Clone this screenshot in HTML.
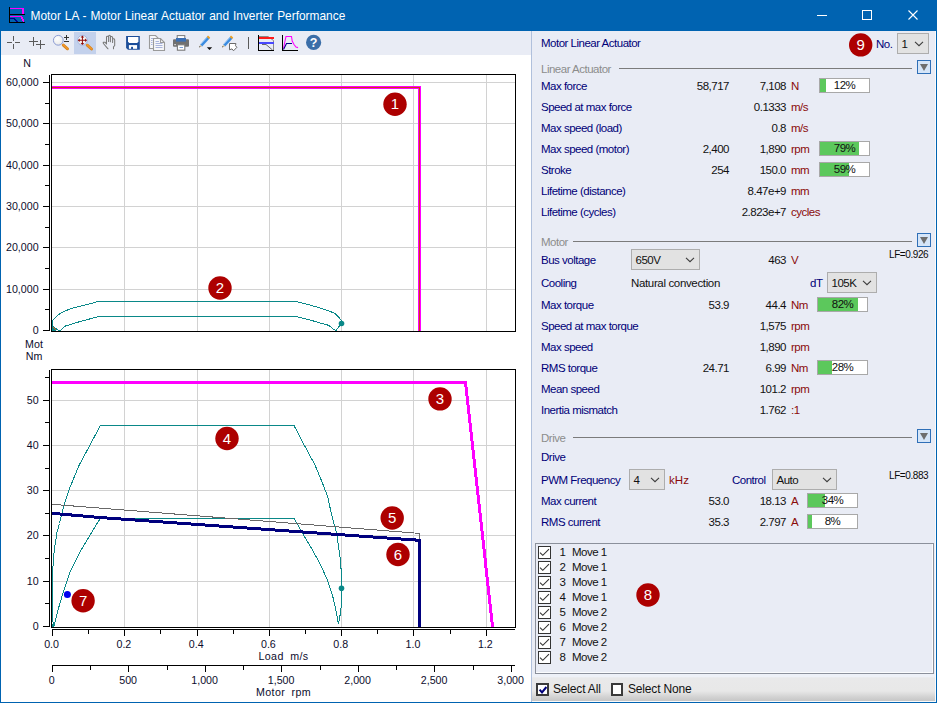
<!DOCTYPE html>
<html>
<head>
<meta charset="utf-8">
<title>Motor LA - Motor Linear Actuator and Inverter Performance</title>
<style>
html,body{margin:0;padding:0;}
body{width:937px;height:703px;overflow:hidden;background:#fff;position:relative;font-family:"Liberation Sans",sans-serif;}
.abs{position:absolute;}
#titlebar{left:0;top:0;width:937px;height:31px;background:#0063b1;}
#title{left:30.5px;top:9px;color:#fff;font-size:11.9px;word-spacing:0.6px;line-height:15px;white-space:nowrap;}
#toolbar{left:1px;top:31px;width:530px;height:24px;background:#e9ecf5;}
#rpanel{left:531px;top:31px;width:405px;height:671px;background:#e9ecf5;border-left:1px solid #b0c0dc;box-sizing:border-box;}
#bl{left:0;top:31px;width:1px;height:672px;background:#0063b1;}
#br{left:936px;top:31px;width:1px;height:672px;background:#0063b1;}
#bb{left:0;top:702px;width:937px;height:1px;background:#0063b1;}
#svgall{left:0;top:0;}
.lbl{position:absolute;color:#000078;font-size:11.5px;line-height:13px;letter-spacing:-0.5px;white-space:nowrap;}
.val{position:absolute;color:#111;font-size:11.5px;line-height:13px;letter-spacing:-0.5px;white-space:nowrap;text-align:right;}
.unit{position:absolute;color:#8a0a0a;font-size:11.5px;line-height:13px;letter-spacing:-0.5px;white-space:nowrap;}
.sec{position:absolute;color:#8c8c8c;font-size:11.5px;line-height:13px;letter-spacing:-0.5px;white-space:nowrap;}
.secline{position:absolute;height:1px;background:#7b7b7b;}
.bar{position:absolute;height:13px;width:49px;background:#fff;border:1px solid #a8a8a8;font-size:11.5px;line-height:13px;text-align:center;color:#111;letter-spacing:-0.5px;overflow:hidden;}
.bar i{position:absolute;left:0;top:0;bottom:0;background:#5cc85c;display:block;}
.bar span{position:relative;}
.combo{position:absolute;box-sizing:border-box;border:1px solid #adadad;background:#e2e2e2;font-size:11.5px;color:#111;padding-left:3.5px;letter-spacing:-0.5px;white-space:nowrap;}
.li{position:absolute;left:559px;font-size:11.5px;line-height:13px;color:#111;white-space:nowrap;letter-spacing:-0.5px;}
.cb{position:absolute;left:538px;width:11px;height:11px;border:1px solid #333;background:#fff;}
.cb svg{display:block;}

.lf{position:absolute;font-size:10px;line-height:11px;color:#0a0a0a;white-space:nowrap;letter-spacing:-0.42px;}
.colbtn{position:absolute;box-sizing:border-box;width:14px;height:14px;border:1px solid #2f6fb7;background:#d5e5f8;}
.colbtn:after{content:"";position:absolute;left:1.8px;top:3px;border-left:4.2px solid transparent;border-right:4.2px solid transparent;border-top:7px solid #6e6e6e;}
#listbox{position:absolute;left:535px;top:543px;width:399px;height:131px;border:1px solid #8b909b;box-sizing:border-box;box-shadow:inset -1px -1px 0 #fbfcfe;}
#botstrip{position:absolute;left:532px;top:674px;width:403px;height:27px;background:linear-gradient(#eef1f8 0px,#eef1f8 2.5px,#e9e9ea 4px,#e8e8e8 17px,#d2d2d2 23px,#c6c6c6 27px);}
#botw{position:absolute;left:532px;top:701px;width:404px;height:1px;background:#fafafa;}
#rw{position:absolute;left:935px;top:31px;width:1px;height:671px;background:#f9fafc;}
.cb2{position:absolute;box-sizing:border-box;width:13px;height:13px;border:2px solid #3a3a3a;background:#fff;}
.cb2 svg{position:absolute;left:-0.5px;top:-0.5px;display:block;}
.sel{position:absolute;font-size:12px;line-height:14px;color:#111;white-space:nowrap;letter-spacing:-0.17px;}
</style>
</head>
<body>
<div id="titlebar" class="abs"></div>
<div id="title" class="abs">Motor LA - Motor Linear Actuator and Inverter Performance</div>
<div id="toolbar" class="abs"></div>
<div id="rpanel" class="abs"></div>
<div class="lbl" style="left:541px;top:37.3px">Motor Linear Actuator</div>
<div class="lbl" style="left:876px;top:38px">No.</div>
<div class="combo" style="left:897px;top:33px;width:32px;height:21px;line-height:20.4px">1<svg width="10" height="6" viewBox="0 0 10 6" style="position:absolute;right:4px;top:7.0px"><path d="M1 0.9L5 4.7L9 0.9" fill="none" stroke="#3c3c3c" stroke-width="1.1"/></svg></div>
<div class="sec" style="left:541px;top:63px">Linear Actuator</div>
<div class="secline" style="left:619px;top:68px;width:293px"></div>
<div class="colbtn" style="left:917px;top:60px"></div>
<div class="lbl" style="left:541px;top:80px">Max force</div>
<div class="val" style="left:649px;width:80px;top:80px">58,717</div>
<div class="val" style="left:706px;width:80px;top:80px">7,108</div>
<div class="unit" style="left:791px;top:80px">N</div>
<div class="bar" style="left:819px;top:78px"><i style="width:5.9px"></i><span>12%</span></div>
<div class="lbl" style="left:541px;top:101px">Speed at max force</div>
<div class="val" style="left:706px;width:80px;top:101px">0.1333</div>
<div class="unit" style="left:791px;top:101px">m/s</div>
<div class="lbl" style="left:541px;top:122px">Max speed (load)</div>
<div class="val" style="left:706px;width:80px;top:122px">0.8</div>
<div class="unit" style="left:791px;top:122px">m/s</div>
<div class="lbl" style="left:541px;top:143px">Max speed (motor)</div>
<div class="val" style="left:649px;width:80px;top:143px">2,400</div>
<div class="val" style="left:706px;width:80px;top:143px">1,890</div>
<div class="unit" style="left:791px;top:143px">rpm</div>
<div class="bar" style="left:819px;top:141px"><i style="width:38.7px"></i><span>79%</span></div>
<div class="lbl" style="left:541px;top:164px">Stroke</div>
<div class="val" style="left:649px;width:80px;top:164px">254</div>
<div class="val" style="left:706px;width:80px;top:164px">150.0</div>
<div class="unit" style="left:791px;top:164px">mm</div>
<div class="bar" style="left:819px;top:162px"><i style="width:28.9px"></i><span>59%</span></div>
<div class="lbl" style="left:541px;top:185px">Lifetime (distance)</div>
<div class="val" style="left:706px;width:80px;top:185px">8.47e+9</div>
<div class="unit" style="left:791px;top:185px">mm</div>
<div class="lbl" style="left:541px;top:206px">Lifetime (cycles)</div>
<div class="val" style="left:706px;width:80px;top:206px">2.823e+7</div>
<div class="unit" style="left:791px;top:206px">cycles</div>
<div class="sec" style="left:541px;top:236px">Motor</div>
<div class="secline" style="left:573px;top:241px;width:339px"></div>
<div class="colbtn" style="left:917px;top:233px"></div>
<div class="lbl" style="left:541px;top:253.5px">Bus voltage</div>
<div class="combo" style="left:631px;top:249px;width:69px;height:21px;line-height:20.4px">650V<svg width="10" height="6" viewBox="0 0 10 6" style="position:absolute;right:4px;top:7.0px"><path d="M1 0.9L5 4.7L9 0.9" fill="none" stroke="#3c3c3c" stroke-width="1.1"/></svg></div>
<div class="val" style="left:706px;width:80px;top:253.5px">463</div>
<div class="unit" style="left:791px;top:253.5px">V</div>
<div class="lf" style="left:889px;top:249px">LF=0.926</div>
<div class="lbl" style="left:541px;top:276.5px">Cooling</div>
<div class="val" style="left:631px;top:276.5px;text-align:left;letter-spacing:-0.35px">Natural convection</div>
<div class="lbl" style="left:810px;top:276.5px">dT</div>
<div class="combo" style="left:827px;top:272px;width:50px;height:21px;line-height:20.4px">105K<svg width="10" height="6" viewBox="0 0 10 6" style="position:absolute;right:4px;top:7.0px"><path d="M1 0.9L5 4.7L9 0.9" fill="none" stroke="#3c3c3c" stroke-width="1.1"/></svg></div>
<div class="lbl" style="left:541px;top:299px">Max torque</div>
<div class="val" style="left:649px;width:80px;top:299px">53.9</div>
<div class="val" style="left:706px;width:80px;top:299px">44.4</div>
<div class="unit" style="left:791px;top:299px">Nm</div>
<div class="bar" style="left:817px;top:297px"><i style="width:40.2px"></i><span>82%</span></div>
<div class="lbl" style="left:541px;top:320px">Speed at max torque</div>
<div class="val" style="left:706px;width:80px;top:320px">1,575</div>
<div class="unit" style="left:791px;top:320px">rpm</div>
<div class="lbl" style="left:541px;top:341px">Max speed</div>
<div class="val" style="left:706px;width:80px;top:341px">1,890</div>
<div class="unit" style="left:791px;top:341px">rpm</div>
<div class="lbl" style="left:541px;top:362px">RMS torque</div>
<div class="val" style="left:649px;width:80px;top:362px">24.71</div>
<div class="val" style="left:706px;width:80px;top:362px">6.99</div>
<div class="unit" style="left:791px;top:362px">Nm</div>
<div class="bar" style="left:817px;top:360px"><i style="width:13.7px"></i><span>28%</span></div>
<div class="lbl" style="left:541px;top:383px">Mean speed</div>
<div class="val" style="left:706px;width:80px;top:383px">101.2</div>
<div class="unit" style="left:791px;top:383px">rpm</div>
<div class="lbl" style="left:541px;top:404px">Inertia mismatch</div>
<div class="val" style="left:706px;width:80px;top:404px">1.762</div>
<div class="unit" style="left:791px;top:404px">:1</div>
<div class="sec" style="left:541px;top:432px">Drive</div>
<div class="secline" style="left:573px;top:437px;width:339px"></div>
<div class="colbtn" style="left:917px;top:429px"></div>
<div class="lbl" style="left:541px;top:451px">Drive</div>
<div class="lbl" style="left:541px;top:473.5px">PWM Frequency</div>
<div class="combo" style="left:629px;top:469px;width:36px;height:21px;line-height:20.4px">4<svg width="10" height="6" viewBox="0 0 10 6" style="position:absolute;right:4px;top:7.0px"><path d="M1 0.9L5 4.7L9 0.9" fill="none" stroke="#3c3c3c" stroke-width="1.1"/></svg></div>
<div class="unit" style="left:669px;top:473.5px;letter-spacing:0.1px">kHz</div>
<div class="lbl" style="left:732px;top:473.5px">Control</div>
<div class="combo" style="left:772px;top:469px;width:65px;height:21px;line-height:20.4px">Auto<svg width="10" height="6" viewBox="0 0 10 6" style="position:absolute;right:4px;top:7.0px"><path d="M1 0.9L5 4.7L9 0.9" fill="none" stroke="#3c3c3c" stroke-width="1.1"/></svg></div>
<div class="lf" style="left:889px;top:470px">LF=0.883</div>
<div class="lbl" style="left:541px;top:495px">Max current</div>
<div class="val" style="left:649px;width:80px;top:495px">53.0</div>
<div class="val" style="left:706px;width:80px;top:495px">18.13</div>
<div class="unit" style="left:791px;top:495px">A</div>
<div class="bar" style="left:807px;top:493px"><i style="width:16.7px"></i><span>34%</span></div>
<div class="lbl" style="left:541px;top:516px">RMS current</div>
<div class="val" style="left:649px;width:80px;top:516px">35.3</div>
<div class="val" style="left:706px;width:80px;top:516px">2.797</div>
<div class="unit" style="left:791px;top:516px">A</div>
<div class="bar" style="left:807px;top:514px"><i style="width:3.9px"></i><span>8%</span></div>
<div id="listbox"></div>
<div class="cb" style="top:546px"><svg width="11" height="11" viewBox="0 0 11 11"><path d="M1 5.6L3.8 8.3L10 2.2" fill="none" stroke="#333" stroke-width="1.1"/></svg></div>
<div class="li" style="top:546px;left:559.5px">1</div>
<div class="li" style="top:546px;left:572px">Move 1</div>
<div class="cb" style="top:561px"><svg width="11" height="11" viewBox="0 0 11 11"><path d="M1 5.6L3.8 8.3L10 2.2" fill="none" stroke="#333" stroke-width="1.1"/></svg></div>
<div class="li" style="top:561px;left:559.5px">2</div>
<div class="li" style="top:561px;left:572px">Move 1</div>
<div class="cb" style="top:576px"><svg width="11" height="11" viewBox="0 0 11 11"><path d="M1 5.6L3.8 8.3L10 2.2" fill="none" stroke="#333" stroke-width="1.1"/></svg></div>
<div class="li" style="top:576px;left:559.5px">3</div>
<div class="li" style="top:576px;left:572px">Move 1</div>
<div class="cb" style="top:591px"><svg width="11" height="11" viewBox="0 0 11 11"><path d="M1 5.6L3.8 8.3L10 2.2" fill="none" stroke="#333" stroke-width="1.1"/></svg></div>
<div class="li" style="top:591px;left:559.5px">4</div>
<div class="li" style="top:591px;left:572px">Move 1</div>
<div class="cb" style="top:606px"><svg width="11" height="11" viewBox="0 0 11 11"><path d="M1 5.6L3.8 8.3L10 2.2" fill="none" stroke="#333" stroke-width="1.1"/></svg></div>
<div class="li" style="top:606px;left:559.5px">5</div>
<div class="li" style="top:606px;left:572px">Move 2</div>
<div class="cb" style="top:621px"><svg width="11" height="11" viewBox="0 0 11 11"><path d="M1 5.6L3.8 8.3L10 2.2" fill="none" stroke="#333" stroke-width="1.1"/></svg></div>
<div class="li" style="top:621px;left:559.5px">6</div>
<div class="li" style="top:621px;left:572px">Move 2</div>
<div class="cb" style="top:636px"><svg width="11" height="11" viewBox="0 0 11 11"><path d="M1 5.6L3.8 8.3L10 2.2" fill="none" stroke="#333" stroke-width="1.1"/></svg></div>
<div class="li" style="top:636px;left:559.5px">7</div>
<div class="li" style="top:636px;left:572px">Move 2</div>
<div class="cb" style="top:651px"><svg width="11" height="11" viewBox="0 0 11 11"><path d="M1 5.6L3.8 8.3L10 2.2" fill="none" stroke="#333" stroke-width="1.1"/></svg></div>
<div class="li" style="top:651px;left:559.5px">8</div>
<div class="li" style="top:651px;left:572px">Move 2</div>
<div id="botstrip"></div>
<div class="cb2" style="left:536px;top:683px"><svg width="10" height="10" viewBox="0 0 10 10"><path d="M1.6 4.6L4 7.4L8.4 2" fill="none" stroke="#00007a" stroke-width="2"/></svg></div>
<div class="sel" style="left:553px;top:682px">Select All</div>
<div class="cb2" style="left:611px;top:683px;width:12px"></div>
<div class="sel" style="left:628px;top:682px">Select None</div>
<svg id="svgall" class="abs" width="937" height="703" viewBox="0 0 937 703" font-family="'Liberation Sans',sans-serif">
<g shape-rendering="crispEdges" fill="none">
<g stroke="#d2d2d2" stroke-width="1">
<path d="M124.5 75V331"/>
<path d="M124.5 370V627"/>
<path d="M197.5 75V331"/>
<path d="M197.5 370V627"/>
<path d="M269.5 75V331"/>
<path d="M269.5 370V627"/>
<path d="M341.5 75V331"/>
<path d="M341.5 370V627"/>
<path d="M413.5 75V331"/>
<path d="M413.5 370V627"/>
<path d="M486.5 75V331"/>
<path d="M486.5 370V627"/>
<path d="M52 289.5H515"/>
<path d="M52 247.5H515"/>
<path d="M52 206.5H515"/>
<path d="M52 165.5H515"/>
<path d="M52 123.5H515"/>
<path d="M52 82.5H515"/>
<path d="M52 581.5H515"/>
<path d="M52 535.5H515"/>
<path d="M52 490.5H515"/>
<path d="M52 445.5H515"/>
<path d="M52 400.5H515"/>
</g>
<g stroke="#000" stroke-width="1">
<rect x="51.5" y="74.5" width="464" height="257"/>
<rect x="51.5" y="369.5" width="464" height="258"/>
<path d="M49.5 75V331"/>
<path d="M49.5 370V627"/>
<path d="M43 330.5H49"/>
<path d="M45 309.5H49"/>
<path d="M43 289.5H49"/>
<path d="M45 268.5H49"/>
<path d="M43 247.5H49"/>
<path d="M45 227.5H49"/>
<path d="M43 206.5H49"/>
<path d="M45 185.5H49"/>
<path d="M43 165.5H49"/>
<path d="M45 144.5H49"/>
<path d="M43 123.5H49"/>
<path d="M45 103.5H49"/>
<path d="M43 82.5H49"/>
<path d="M43 626.5H49"/>
<path d="M45 603.5H49"/>
<path d="M43 581.5H49"/>
<path d="M45 558.5H49"/>
<path d="M43 535.5H49"/>
<path d="M45 513.5H49"/>
<path d="M43 490.5H49"/>
<path d="M45 468.5H49"/>
<path d="M43 445.5H49"/>
<path d="M45 422.5H49"/>
<path d="M43 400.5H49"/>
<path d="M45 377.5H49"/>
<path d="M52 629.5H515"/>
<path d="M52.5 629V636"/>
<path d="M88.5 629V634"/>
<path d="M124.5 629V636"/>
<path d="M160.5 629V634"/>
<path d="M197.5 629V636"/>
<path d="M233.5 629V634"/>
<path d="M269.5 629V636"/>
<path d="M305.5 629V634"/>
<path d="M341.5 629V636"/>
<path d="M377.5 629V634"/>
<path d="M413.5 629V636"/>
<path d="M450.5 629V634"/>
<path d="M486.5 629V636"/>
<path d="M52 665.5H515"/>
<path d="M52.5 665V672"/>
<path d="M90.5 665V670"/>
<path d="M128.5 665V672"/>
<path d="M167.5 665V670"/>
<path d="M205.5 665V672"/>
<path d="M243.5 665V670"/>
<path d="M281.5 665V672"/>
<path d="M320.5 665V670"/>
<path d="M358.5 665V672"/>
<path d="M396.5 665V670"/>
<path d="M434.5 665V672"/>
<path d="M473.5 665V670"/>
<path d="M511.5 665V672"/>
</g>
</g>
<g font-size="10.67" fill="#0c0c2c">
<text x="38.6" y="334.0" text-anchor="end">0</text>
<text x="38.6" y="292.7" text-anchor="end">10,000</text>
<text x="38.6" y="251.3" text-anchor="end">20,000</text>
<text x="38.6" y="210.0" text-anchor="end">30,000</text>
<text x="38.6" y="168.7" text-anchor="end">40,000</text>
<text x="38.6" y="127.3" text-anchor="end">50,000</text>
<text x="38.6" y="86.0" text-anchor="end">60,000</text>
<text x="38.6" y="630.0" text-anchor="end">0</text>
<text x="38.6" y="584.7" text-anchor="end">10</text>
<text x="38.6" y="539.4" text-anchor="end">20</text>
<text x="38.6" y="494.2" text-anchor="end">30</text>
<text x="38.6" y="448.9" text-anchor="end">40</text>
<text x="38.6" y="403.6" text-anchor="end">50</text>
<text x="51.6" y="647.7" text-anchor="middle">0.0</text>
<text x="123.9" y="647.7" text-anchor="middle">0.2</text>
<text x="196.2" y="647.7" text-anchor="middle">0.4</text>
<text x="268.4" y="647.7" text-anchor="middle">0.6</text>
<text x="340.7" y="647.7" text-anchor="middle">0.8</text>
<text x="413.0" y="647.7" text-anchor="middle">1.0</text>
<text x="485.3" y="647.7" text-anchor="middle">1.2</text>
<text x="51.6" y="683.7" text-anchor="middle">0</text>
<text x="128.1" y="683.7" text-anchor="middle">500</text>
<text x="204.6" y="683.7" text-anchor="middle">1,000</text>
<text x="281.1" y="683.7" text-anchor="middle">1,500</text>
<text x="357.6" y="683.7" text-anchor="middle">2,000</text>
<text x="434.1" y="683.7" text-anchor="middle">2,500</text>
<text x="510.6" y="683.7" text-anchor="middle">3,000</text>
<text x="27" y="67" text-anchor="middle">N</text>
<text x="34" y="348" text-anchor="middle">Mot</text>
<text x="34" y="360" text-anchor="middle">Nm</text>
<text x="283.5" y="660" text-anchor="middle" style="word-spacing:3px;letter-spacing:0.4px">Load m/s</text>
<text x="283.5" y="696" text-anchor="middle" style="word-spacing:3px;letter-spacing:0.4px">Motor rpm</text>
</g>
<g fill="none" shape-rendering="crispEdges">
<path stroke="#0a8888" stroke-width="1" d="M52.5 330 V320.5 L58.2 314.8 L64 311.5 L71 308.6 L82 305.8 L98.4 301.5 H295.8 L310 305 L322.7 308.8 L334.7 313.2 L341.5 320.3 V323.5 L336 330.5 L333 328.9 L329 325.4 L321 323.3 L310 319.9 L295.8 316.5 H98.4 L86.4 319.9 L75.3 322.9 L64.6 326.3 L60.8 330 H58.2 L53 326.7"/>
<path fill="#0a8888" stroke="none" d="M52 324 L56 330.5 H52Z"/>
<path stroke="#e85a10" stroke-width="1" d="M53.5 327 L55.5 330"/>
<path stroke="#0a8888" stroke-width="1" d="M53.2 625.5 L52.5 611.6 L52.5 581.7 L53.2 560.8 L54.7 547.4 L57.0 532.4 L59.5 523.5 L61.4 515.5 L64.4 503.6 L68.9 490.1 L71.9 482.7 L79.3 464.8 L89.8 445.4 L100.4 425.5 L294.0 425.5 L304.4 445.4 L314.9 464.8 L322.3 482.7 L327.5 496.1 L329.8 506.6 L333.5 522.0 L336.5 532.4 L338.7 547.4 L340.5 560.8 L341.4 574.2 L341.4 605.6 L340.2 614.5 L338.4 624.2 L336.5 613.0 L332.8 596.6 L327.5 580.2 L320.8 565.3 L311.9 548.9 L302.9 533.9 L296.2 522.0 L294.0 518.5 L100.4 518.5 L98.0 522.0 L89.8 535.4 L80.1 551.9 L70.4 571.3 L63.7 590.7 L58.4 608.6 L54.7 623.5 L54.0 626.0"/>
<path fill="#0a8888" stroke="none" d="M52 624 H54 V626.5 H52Z"/>
</g>
<g fill="none" shape-rendering="crispEdges">
<path stroke="#686868" stroke-width="1" d="M52 504.3 L419.5 533.4 V540"/>
<path stroke="#00007e" stroke-width="3" stroke-linejoin="miter" d="M52 513.3 L100 517.5 L419.5 540.3 V626.5"/>
<path stroke="#ff00ff" stroke-width="3" d="M52 382.5 H467"/>
<path fill="#ff00ff" stroke="none" d="M464 382 H467 L494.1 627 H491.1 Z"/>
<path stroke="#ff00ff" stroke-width="3" stroke-linejoin="miter" d="M52 87.5 H419.5 V330.5"/>
<path stroke="#d04010" stroke-width="1" stroke-linejoin="miter" d="M52 87.5 H419.5 V330.5"/>
</g>
<circle cx="341.5" cy="323.5" r="2.8" fill="#0a8888"/>
<circle cx="341.5" cy="588.3" r="2.8" fill="#0a8888"/>
<circle cx="67.4" cy="594.6" r="3.5" fill="#0000f0"/>
<circle cx="395" cy="104.2" r="11.7" fill="#ad0000"/>
<text x="395" y="109.4" text-anchor="middle" font-size="15" fill="#fff">1</text>
<circle cx="220" cy="288" r="11.7" fill="#ad0000"/>
<text x="220" y="293.2" text-anchor="middle" font-size="15" fill="#fff">2</text>
<circle cx="440" cy="398.9" r="11.7" fill="#ad0000"/>
<text x="440" y="404.1" text-anchor="middle" font-size="15" fill="#fff">3</text>
<circle cx="227" cy="438.5" r="11.7" fill="#ad0000"/>
<text x="227" y="443.7" text-anchor="middle" font-size="15" fill="#fff">4</text>
<circle cx="392.2" cy="518" r="11.7" fill="#ad0000"/>
<text x="392.2" y="523.2" text-anchor="middle" font-size="15" fill="#fff">5</text>
<circle cx="398" cy="554.5" r="11.7" fill="#ad0000"/>
<text x="398" y="559.7" text-anchor="middle" font-size="15" fill="#fff">6</text>
<circle cx="83.1" cy="600.8" r="11.7" fill="#ad0000"/>
<text x="83.1" y="606.0" text-anchor="middle" font-size="15" fill="#fff">7</text>
<circle cx="648" cy="595" r="11.7" fill="#ad0000"/>
<text x="648" y="600.2" text-anchor="middle" font-size="15" fill="#fff">8</text>
<circle cx="860.7" cy="44.9" r="11.7" fill="#ad0000"/>
<text x="860.7" y="50.1" text-anchor="middle" font-size="15" fill="#fff">9</text>
</svg>
<svg class="abs" style="left:0;top:0" width="937" height="56" viewBox="0 0 937 56">
<g shape-rendering="crispEdges" fill="none">
<path stroke="#ff00ff" stroke-width="1" d="M10 8.5H24 M10 16.5H22"/>
<path stroke="#ff00ff" stroke-width="2" d="M23 8V14"/>
<path stroke="#ff00ff" stroke-width="1.6" d="M21.5 16.5L23.8 22"/>
<path stroke="#00008c" stroke-width="1.3" d="M10 18.5H13.5L18 22"/>
<path stroke="#000" stroke-width="1" d="M9.5 7V23 M9 14.5H25 M9 22.5H25"/>
</g>
<g stroke="#fff" stroke-width="1" fill="none">
<path shape-rendering="crispEdges" d="M817 15.5H827"/>
<rect shape-rendering="crispEdges" x="862.5" y="10.5" width="9" height="9"/>
<path d="M908.5 10.5L917.5 19.5M917.5 10.5L908.5 19.5" stroke-width="1.1"/>
</g>
<rect x="74" y="32" width="22" height="22" fill="#c3d1ec"/>
<g shape-rendering="crispEdges" stroke="#5a5a5a" stroke-width="1" fill="none">
<path d="M7 42.5H12M15 42.5H20M13.5 36V41M13.5 44V49"/>
<path d="M29 41.5H38M33.5 37V46M36 44.5H45M40.5 40V49"/>
<path d="M248.5 37V49"/>
</g>
<defs><radialGradient id="lens" cx="0.4" cy="0.35" r="0.7"><stop offset="0" stop-color="#ffffff"/><stop offset="0.7" stop-color="#eeeeee"/><stop offset="1" stop-color="#d4d8e4"/></radialGradient></defs>
<path d="M63.3 45.1L67.5 48.8" stroke="#d07f1c" stroke-width="2.9" stroke-linecap="round"/>
<path d="M63.2 44.8L67.5 48.6" stroke="#f0962a" stroke-width="1.7" stroke-linecap="round"/>
<circle cx="58.3" cy="40.3" r="4.9" fill="url(#lens)" stroke="#8c9cd4" stroke-width="1"/>
<path shape-rendering="crispEdges" d="M64 37.5H69M66.5 35V40M64 41.5H69" stroke="#333" stroke-width="1" fill="none"/>
<path d="M87.2 45.2L91.5 49" stroke="#d07f1c" stroke-width="2.9" stroke-linecap="round"/>
<path d="M87.1 44.9L91.5 48.8" stroke="#f0962a" stroke-width="1.7" stroke-linecap="round"/>
<circle cx="82.5" cy="40.3" r="4.9" fill="url(#lens)" stroke="#a4b4de" stroke-width="1"/>
<g fill="#8e0a0a" stroke="none"><path d="M81.9 37h1v6.6h-1z M79 39.8h6.8v1h-6.8z"/><path d="M82.4 35.6l1.8 2h-3.6z M82.4 45l1.8-2h-3.6z M77.7 40.3l2-1.8v3.6z M87.1 40.3l-2-1.8v3.6z"/></g>
<path d="M103.2 42.3L105 42.2L106.5 44V37Q106.5 36.2 107.5 36.2Q108.6 36.2 108.6 37V41.5M108.6 36.5Q108.6 35.2 109.5 35.2Q110.4 35.2 110.4 36.2V41.8M110.4 37.2Q110.6 36.4 111.6 36.5Q112.6 36.6 112.6 37.6V42.5M112.6 39.2Q113 38.5 114 38.7Q114.7 39 114.7 40V45.5L113.5 46.8V48.8M103.2 42.3L103.4 43.5L108 48.8" fill="none" stroke="#787878" stroke-width="1.05" stroke-linejoin="round" stroke-linecap="round"/>
<path d="M126.1 36.1H139.8V49.8H128L126.1 48z" fill="#1c4e9a"/>
<path d="M128 37.1H138.4V41.6L137.2 43H129.2L128 41.6z" fill="#fff"/>
<rect x="128.9" y="45.1" width="8.2" height="3.7" fill="#fff"/>
<rect x="131.1" y="46.8" width="1.9" height="2.2" fill="#1c4e9a"/>
<g stroke="#9a9a9a" stroke-width="1.1" fill="#f6f7fa">
<path d="M149.5 35.5h6l3 3v10h-9z"/>
<path d="M153.5 38.5h7l4 4v8h-11z"/>
<path d="M160.5 38.5v4h4" fill="none"/>
</g>
<path d="M155.5 41.5h3.5M155.5 43.5h7M155.5 45.5h7M155.5 47.5h7M151 38.5h2M151 40.5h1.5M151 42.5h1.5M151 44.5h1.5" stroke="#a9b4dc" stroke-width="1" fill="none"/>
<rect x="177.2" y="35.6" width="7.6" height="4" fill="#fff" stroke="#7a7a7a" stroke-width="1"/>
<rect x="173" y="39.2" width="16" height="7.6" rx="1" fill="#707070"/>
<rect x="176" y="38" width="10" height="3.6" fill="#3a6fb5"/>
<rect x="177.4" y="44.8" width="7.4" height="5.4" fill="#fff" stroke="#7a7a7a" stroke-width="1.1"/>
<path d="M179.5 47.5h3.5" stroke="#7aa0d8" stroke-width="1"/>
<rect x="174.2" y="44.2" width="1.8" height="1" fill="#e6e6e6"/>
<path d="M200.2 44.4L207.4 36.4L209.6 38.4L202.2 46.4Z" fill="#3c8ce0"/>
<path d="M201.0 44.0L207.8 36.6" stroke="#8cc0f4" stroke-width="1" fill="none"/>
<path d="M206.8 37.0L208.0 35.6L210.2 37.6L209.0 39.0Z" fill="#f0a020"/>
<path d="M200.2 44.4L202.2 46.4L199 47.4Z" fill="#d8c8a8"/>
<path d="M199.7 45.9L200.5 46.8L199 47.4Z" fill="#333"/>
<path d="M206.8 47.2h5.4l-2.7 2.8z" fill="#111"/>
<path d="M223.2 44.4L230.4 36.4L232.6 38.4L225.2 46.4Z" fill="#3c8ce0"/>
<path d="M224.0 44.0L230.8 36.6" stroke="#8cc0f4" stroke-width="1" fill="none"/>
<path d="M229.8 37.0L231.0 35.6L233.2 37.6L232.0 39.0Z" fill="#f0a020"/>
<path d="M223.2 44.4L225.2 46.4L222 47.4Z" fill="#d8c8a8"/>
<path d="M222.7 45.9L223.5 46.8L222 47.4Z" fill="#333"/>
<path d="M229.5 43.5H235.9L235.5 45.7L236.9 47.3L233.5 50.8L232 48.9L229.5 49.8Z" fill="#fff" stroke="#6a6a6a" stroke-width="1" stroke-linejoin="miter"/>
<g fill="none">
<path d="M259 36.5H268L273.5 40.5V50" stroke="#8a8a8a" stroke-width="1"/>
<path d="M262 44.5H266L272.5 50" stroke="#6a6a6a" stroke-width="1"/>
<path shape-rendering="crispEdges" d="M259 38H274" stroke="#ff1a1a" stroke-width="2"/>
<path shape-rendering="crispEdges" d="M259 43H274" stroke="#4848ff" stroke-width="2"/>
<path shape-rendering="crispEdges" d="M258.5 35V51M258 50.5H274" stroke="#000" stroke-width="1"/>
<path d="M283.5 48.5L284.8 42L286 36.5H291.5L292.2 41L294 44.5L296 47L298 47.6" stroke="#ff00ff" stroke-width="1.1"/>
<path d="M283.5 49.5L286.5 43.5H292" stroke="#00008c" stroke-width="1.1"/>
<path shape-rendering="crispEdges" d="M282.5 35V51M282 50.5H298" stroke="#000" stroke-width="1"/>
</g>
<circle cx="313.6" cy="42.4" r="7.6" fill="#3b6ea8"/>
<text x="313.6" y="47" text-anchor="middle" font-family="'Liberation Sans',sans-serif" font-weight="bold" font-size="12.5" fill="#fff">?</text>
</svg>
<div id="botw"></div><div id="rw"></div>
<div id="bl" class="abs"></div><div id="br" class="abs"></div><div id="bb" class="abs"></div>
</body>
</html>
